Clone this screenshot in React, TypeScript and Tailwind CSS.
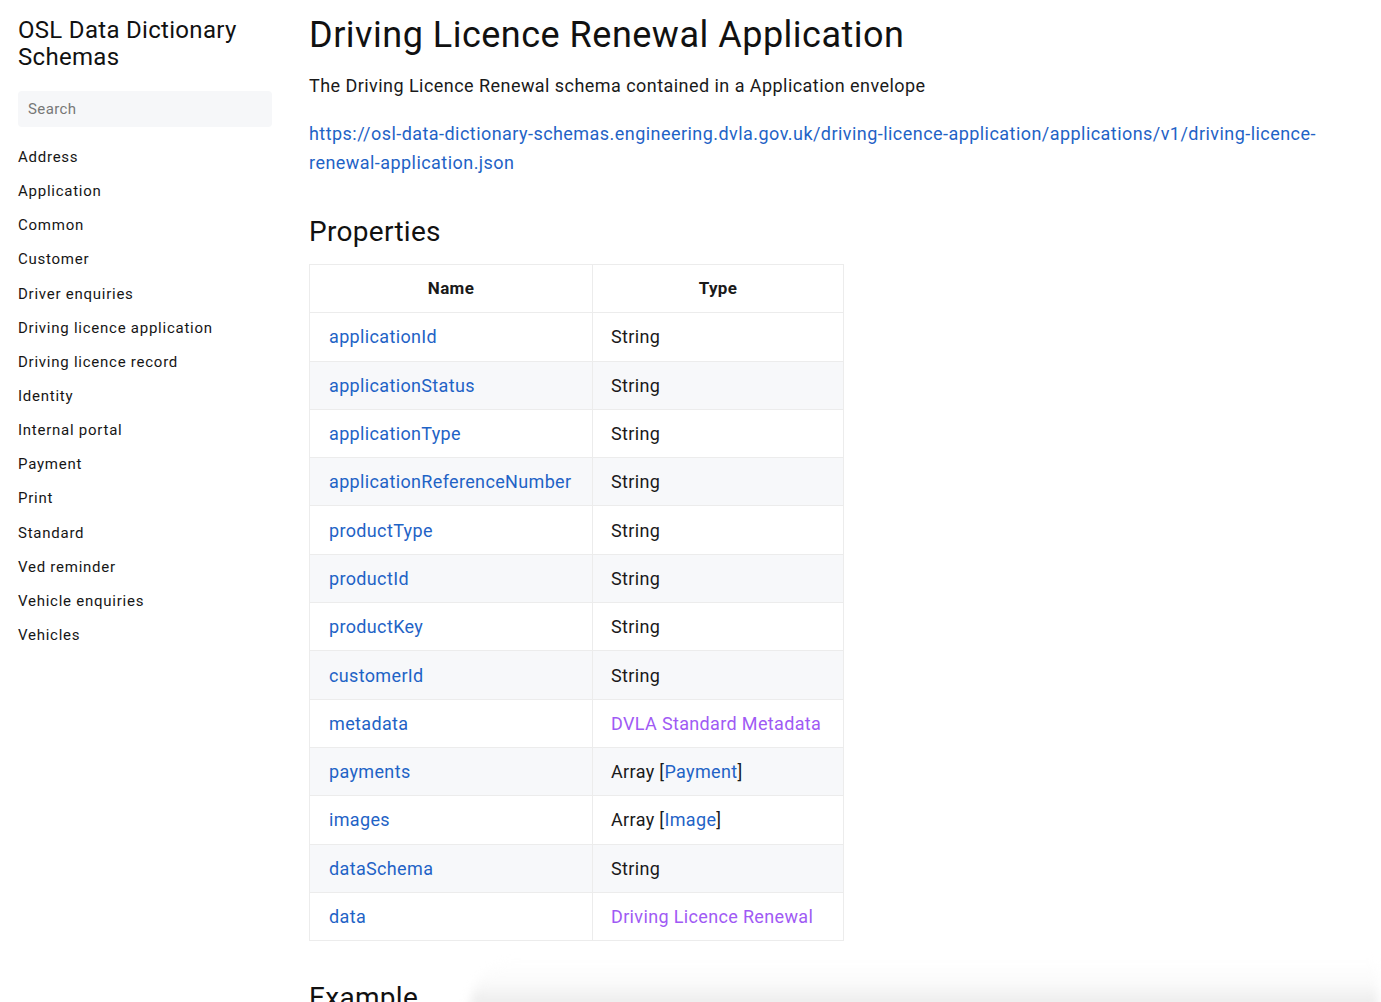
import React from 'react';

const navItems = [
  'Address',
  'Application',
  'Common',
  'Customer',
  'Driver enquiries',
  'Driving licence application',
  'Driving licence record',
  'Identity',
  'Internal portal',
  'Payment',
  'Print',
  'Standard',
  'Ved reminder',
  'Vehicle enquiries',
  'Vehicles',
];

type Row = { name: string; type: React.ReactNode };

const link = 'text-[#1f63c6]';
const ref = 'text-[#a05af4]';

const rows: Row[] = [
  { name: 'applicationId', type: 'String' },
  { name: 'applicationStatus', type: 'String' },
  { name: 'applicationType', type: 'String' },
  { name: 'applicationReferenceNumber', type: 'String' },
  { name: 'productType', type: 'String' },
  { name: 'productId', type: 'String' },
  { name: 'productKey', type: 'String' },
  { name: 'customerId', type: 'String' },
  { name: 'metadata', type: <span className={ref}>DVLA Standard Metadata</span> },
  {
    name: 'payments',
    type: (
      <>
        Array [<span className={link}>Payment</span>]
      </>
    ),
  },
  {
    name: 'images',
    type: (
      <>
        Array [<span className={link}>Image</span>]
      </>
    ),
  },
  { name: 'dataSchema', type: 'String' },
  { name: 'data', type: <span className={ref}>Driving Licence Renewal</span> },
];

function Sidebar() {
  return (
    <aside className="w-[309px] flex-none pl-[18px] pr-[37px] pt-[17px]">
      <div className="text-[24px] leading-[27px] tracking-[0.3px] text-[#111]">
        OSL Data Dictionary Schemas
      </div>
      <div className="mt-[20px] flex h-[36px] items-center rounded-[4px] bg-[#f6f7f9] px-[10px] text-[15px] tracking-[0.4px] text-[#777]">
        Search
      </div>
      <nav className="mt-[18px] flex flex-col">
        {navItems.map((item) => (
          <a
            key={item}
            className="block h-[34.15px] text-[15px] leading-[24px] tracking-[0.75px] text-[#161616]"
          >
            {item}
          </a>
        ))}
      </nav>
    </aside>
  );
}

export default function App() {
  return (
    <div
      className="relative h-[1002px] overflow-hidden bg-white"
      style={{ fontFamily: 'Roboto, "Liberation Sans", sans-serif' }}
    >
      <div className="flex">
        <Sidebar />
        <main className="min-w-0 flex-1 pr-[40px] pt-[12px]">
          <h1 className="text-[36px] leading-[46px] tracking-[0.5px] text-[#111]">
            Driving Licence Renewal Application
          </h1>
          <p className="mt-[15px] text-[18px] leading-[25px] tracking-[0.45px] text-[#1a1a1a]">
            The Driving Licence Renewal schema contained in a Application envelope
          </p>
          <p className="mt-[21px] text-[18px] leading-[29px] tracking-[0.45px] text-[#1f63c6]">
            https://osl-data-dictionary-schemas.engineering.dvla.gov.uk/driving-licence-application/applications/v1/driving-licence-renewal-application.json
          </p>

          <h2 className="mt-[37px] text-[28px] leading-[36px] tracking-[0.3px] text-[#111]">
            Properties
          </h2>
          <table className="mt-[14px] border-collapse text-[18px] tracking-[0.35px] text-[#1a1a1a]">
            <thead>
              <tr className="h-[48.3px]">
                <th className="w-[283px] border border-[#ececec] text-center text-[17px] font-bold">
                  Name
                </th>
                <th className="w-[251px] border border-[#ececec] text-center text-[17px] font-bold">
                  Type
                </th>
              </tr>
            </thead>
            <tbody>
              {rows.map((r, i) => (
                <tr
                  key={r.name}
                  className={`h-[48.3px] ${i % 2 === 1 ? 'bg-[#f7f8fa]' : 'bg-white'}`}
                >
                  <td className={`border border-[#ececec] pl-[19px] pr-[12px] ${link}`}>{r.name}</td>
                  <td className="border border-[#ececec] pl-[18px] pr-[12px]">{r.type}</td>
                </tr>
              ))}
            </tbody>
          </table>

          <h2 className="mt-[39px] text-[28px] leading-[36px] tracking-[0.3px] text-[#111]">
            Example
          </h2>
        </main>
      </div>

      <div className="pointer-events-none absolute bottom-[-6px] left-[470px] right-[3px] h-[48px] rounded-tl-[140px] bg-gradient-to-b from-[rgba(255,255,255,0)] via-[rgba(248,248,248,0.7)] to-[#e8e8e8] blur-[5px]" />
    </div>
  );
}
